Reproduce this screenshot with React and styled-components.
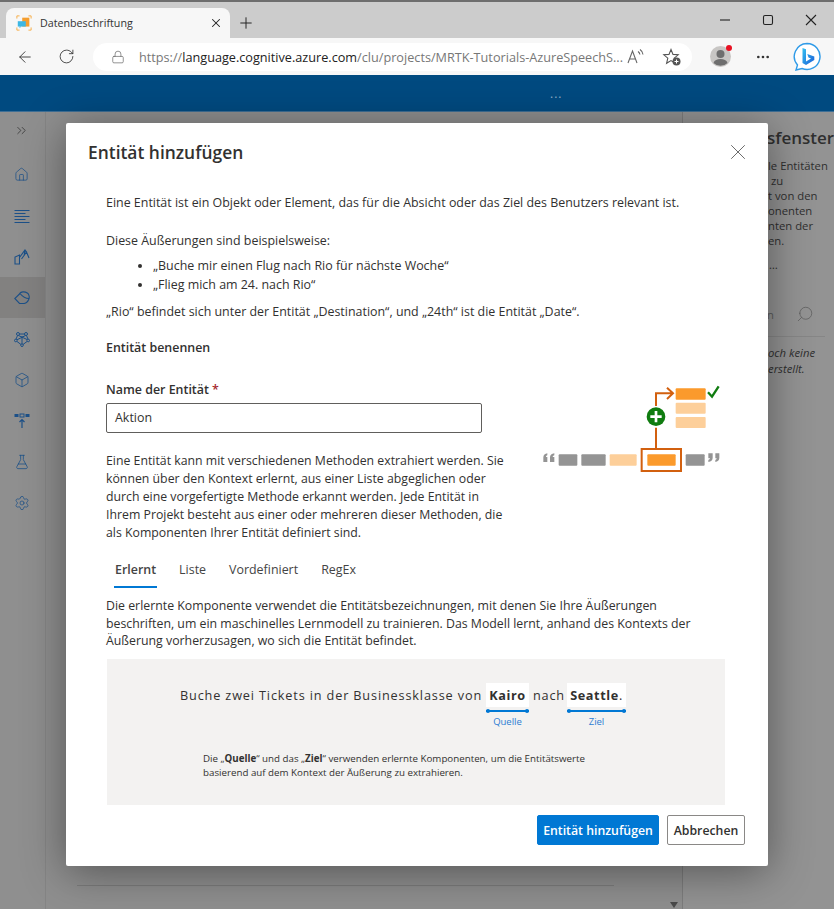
import React from "react";
import styled, { createGlobalStyle } from "styled-components";
import {
  ArrowLeft,
  Box,
  ChevronsRight,
  FlaskConical,
  House,
  Lock,
  MoreHorizontal,
  Plus,
  RotateCw,
  Search,
  Settings,
  X,
} from "lucide-react";

const GlobalStyle = createGlobalStyle`
  html, body {
    margin: 0;
    padding: 0;
    background: #8f8f8f;
  }
  body {
    font-family: "Open Sans", "Noto Sans", sans-serif;
    color: #323130;
  }
  svg {
    flex-shrink: 0;
  }
`;

const Window = styled.div`
  position: relative;
  width: 834px;
  height: 909px;
  overflow: hidden;
  display: flex;
  flex-direction: column;
`;

const TabStrip = styled.div`
  height: 36px;
  flex: none;
  background: #cccccc;
  border-top: 2px solid #6e6e6e;
  display: flex;
  align-items: flex-end;
  padding-left: 6px;
  position: relative;
`;

const BrowserTab = styled.div`
  width: 224px;
  height: 30px;
  background: #f7f7f7;
  border-radius: 8px 8px 0 0;
  display: flex;
  align-items: center;
  padding: 0 7px 0 10px;
  box-sizing: border-box;
  font-size: 10.7px;
  color: #333;
`;

const TabTitle = styled.span`
  margin-left: 8px;
  flex: 1;
`;

const NewTab = styled.div`
  margin: 0 0 6px 7px;
  display: flex;
  color: #222;
`;

const WindowButtons = styled.div`
  margin-left: auto;
  height: 36px;
  align-self: flex-start;
  display: flex;
  align-items: center;
  gap: 27px;
  padding-right: 15px;
  color: #222;
`;

const Toolbar = styled.div`
  height: 37px;
  flex: none;
  box-sizing: border-box;
  background: #f7f7f7;
  display: flex;
  align-items: center;
  padding: 0 13px 0 16px;
  color: #333;
`;

const ToolGap = styled.div`
  display: flex;
  width: ${(p) => p.$w}px;
  flex: none;
`;

const Address = styled.div`
  width: 599px;
  height: 28px;
  flex: none;
  border-radius: 14px;
  background: #fff;
  display: flex;
  align-items: center;
  padding: 0 10px 0 18px;
  box-sizing: border-box;
  color: #666;
`;

const Url = styled.div`
  margin-left: 14px;
  flex: 1;
  min-width: 0;
  font-size: 12.68px;
  white-space: nowrap;
  color: #777;
  b {
    font-weight: 400;
    color: #222;
  }
`;

const Avatar = styled.div`
  position: relative;
  width: 21px;
  height: 21px;
  display: flex;
  border-radius: 50%;
  background: #c8c6c4;
  overflow: visible;
  &::after {
    content: "";
    position: absolute;
    right: -1px;
    top: -1px;
    width: 6px;
    height: 6px;
    border-radius: 50%;
    background: #e81123;
  }
`;

const BlueBar = styled.div`
  height: 37px;
  flex: none;
  background: #004a80;
  border-bottom: 1px solid #3f6f95;
  color: #8fb0c8;
  display: flex;
  align-items: center;
  padding-left: 550px;
  box-sizing: border-box;
  font-size: 12px;
  letter-spacing: 1px;
`;

const Page = styled.div`
  flex: 1;
  display: flex;
  min-height: 0;
  background: #8f8f8f;
`;

const Sidebar = styled.nav`
  width: 45px;
  flex: none;
  border-right: 1px solid #858585;
  display: flex;
  flex-direction: column;
`;

const NavItem = styled.div`
  height: 41px;
  flex: none;
  display: flex;
  align-items: center;
  padding-left: 14px;
  color: #1c5088;
  background: ${(p) => (p.$active ? "#828180" : "transparent")};
`;

const ExpandItem = styled(NavItem)`
  height: 42px;
  box-sizing: border-box;
  padding-bottom: 6px;
  color: #3d3d3d;
`;

const Main = styled.main`
  flex: 1;
  position: relative;
  display: flex;
  flex-direction: column;
  justify-content: flex-end;
  padding: 0 68px 23px 31px;
`;

const MainRule = styled.div`
  height: 1px;
  background: #7c7c7c;
`;

const ScrollArrow = styled.div`
  position: absolute;
  right: 4px;
  bottom: 1px;
  width: 0;
  height: 0;
  border-left: 4px solid transparent;
  border-right: 4px solid transparent;
  border-top: 6px solid #4a4a4a;
`;

const HelpPane = styled.aside`
  width: 152px;
  flex: none;
  border-left: 1px solid #7d7d7d;
  box-sizing: border-box;
  padding-top: 14px;
  background: #939393;
  color: #2f2f2f;
  font-size: 11.3px;
  line-height: 15px;
`;

const HelpTitle = styled.div`
  padding-left: ${(p) => p.$x}px;
  font-size: 17px;
  line-height: 24px;
  font-weight: 600;
  white-space: nowrap;
  margin-bottom: 8px;
`;

const HelpLine = styled.div`
  padding-left: ${(p) => p.$x}px;
  white-space: nowrap;
  font-style: ${(p) => (p.$italic ? "italic" : "normal")};
  margin-top: ${(p) => p.$top || 0}px;
`;

const HelpSearch = styled.div`
  margin: 33px 9px 0 84px;
  padding: 0 11px 13px 0;
  border-bottom: 1px solid #868686;
  display: flex;
  justify-content: space-between;
  align-items: center;
  color: #5c5c5c;
`;

const Modal = styled.div`
  position: absolute;
  left: 66px;
  top: 123px;
  width: 702px;
  height: 743px;
  box-sizing: border-box;
  background: #fff;
  border-radius: 2px;
  box-shadow: 0 6px 44px rgba(0, 0, 0, 0.42);
  padding: 16px 23px 21px 40px;
  display: flex;
  flex-direction: column;
  font-size: 12.43px;
  line-height: 18px;
  color: #323130;
`;

const ModalHeader = styled.header`
  display: flex;
  justify-content: space-between;
  align-items: center;
  margin: 0 0 29px -18px;
  height: 26px;
`;

const ModalTitle = styled.h1`
  margin: 0;
  font-size: 17.4px;
  font-weight: 600;
  color: #323130;
`;

const CloseButton = styled.div`
  display: flex;
  color: #555;
  margin-right: -6px;
`;

const Text = styled.p`
  margin: 0 0 ${(p) => p.$after ?? 0}px;
  white-space: nowrap;
`;

const Bullets = styled.ul`
  margin: 0 0 9px;
  padding-left: 47px;
  line-height: 19px;
  white-space: nowrap;
`;

const SectionLabel = styled.div`
  font-weight: 600;
  margin-bottom: 24px;
`;

const NameRow = styled.div`
  display: flex;
  justify-content: space-between;
  padding-right: 20px;
`;

const NameColumn = styled.div`
  width: 376px;
`;

const FieldLabel = styled.label`
  display: block;
  font-weight: 600;
  margin-bottom: 4px;
  span {
    color: #a4262c;
    margin-left: 3px;
  }
`;

const NameInput = styled.div`
  height: 30px;
  box-sizing: border-box;
  border: 1px solid #605e5c;
  border-radius: 2px;
  padding: 0 8px;
  display: flex;
  align-items: center;
  margin-bottom: 19px;
`;

const MethodText = styled(Text)`
  font-size: 12.3px;
`;

const Tabs = styled.div`
  display: flex;
  gap: 23px;
  margin: 17px 0 9px 9px;
  height: 29px;
`;

const TabItem = styled.div`
  position: relative;
  font-weight: ${(p) => (p.$active ? 600 : 400)};
  color: #444;
  padding-top: 2px;
  &::after {
    content: "";
    display: ${(p) => (p.$active ? "block" : "none")};
    position: absolute;
    left: -1px;
    right: -1px;
    bottom: 0;
    height: 2px;
    background: #0078d4;
  }
`;

const TabText = styled(Text)`
  font-size: 12.33px;
  line-height: 17.5px;
`;

const Example = styled.div`
  width: 618px;
  height: 146px;
  flex: none;
  margin: 9px 0 0 1px;
  background: #f3f2f1;
  box-sizing: border-box;
  padding: 24px 0 0 73px;
`;

const Sentence = styled.div`
  display: flex;
  align-items: flex-start;
  font-size: 12.7px;
  line-height: 24px;
  letter-spacing: 0.85px;
  white-space: pre;
`;

const Entity = styled.div`
  display: flex;
  flex-direction: column;
  align-items: center;
  color: #0078d4;
  margin-left: ${(p) => p.$pull || 0}px;
`;

const EntityWord = styled.div`
  background: #fff;
  color: #323130;
  padding: 0 3px;
  letter-spacing: 0.6px;
  b {
    font-weight: 700;
  }
`;

const EntityLine = styled.div`
  position: relative;
  align-self: stretch;
  height: 2px;
  margin-top: 3px;
  background: #0078d4;
  &::before,
  &::after {
    content: "";
    position: absolute;
    top: -1px;
    width: 4px;
    height: 4px;
    border-radius: 50%;
    background: #0078d4;
  }
  &::before {
    left: 0;
  }
  &::after {
    right: 0;
  }
`;

const EntityName = styled.div`
  font-size: 9.5px;
  line-height: 14px;
  letter-spacing: 0;
  margin-top: 3px;
  color: #2b7cd3;
`;

const ExampleNote = styled.p`
  margin: 23px 0 0 23px;
  font-size: 9.75px;
  line-height: 14px;
  white-space: nowrap;
  b {
    font-weight: 700;
  }
`;

const Footer = styled.footer`
  margin-top: auto;
  display: flex;
  justify-content: flex-end;
  gap: 8px;
`;

const Button = styled.button`
  height: 30px;
  padding: 0;
  width: ${(p) => p.$w}px;
  border-radius: 2px;
  font-family: inherit;
  font-size: 12.3px;
  font-weight: 600;
  border: 1px solid ${(p) => (p.$primary ? "#0078d4" : "#8a8886")};
  background: ${(p) => (p.$primary ? "#0078d4" : "#fff")};
  color: ${(p) => (p.$primary ? "#fff" : "#323130")};
`;

const Favicon = () => (
  <svg width="16" height="16" viewBox="0 0 18 18">
    <g fill="none" stroke="#f7a93b" strokeWidth="1">
      <path d="M1 4V1h3M14 1h3v3M17 14v3h-3M4 17H1v-3" />
    </g>
    <rect x="7" y="3" width="8" height="10" fill="#f59e2f" />
    <rect x="2" y="7" width="9" height="6" fill="#3db7e4" />
    <path d="M4 13v2l2-2z" fill="#3db7e4" />
  </svg>
);

const ReadAloud = () => (
  <svg width="18" height="18" viewBox="0 0 18 18" fill="none" stroke="#666" strokeWidth="1.1">
    <path d="M1 15 5.5 3 10 15M2.6 11h5.8" />
    <path d="M11 3.500c1.200.8 1.800 1.800 1.900 3M13 1.500c1.800 1.200 2.800 3 3 5" />
  </svg>
);

const FavAdd = () => (
  <svg width="20" height="20" viewBox="0 0 20 20">
    <path
      d="M9 2.500 11 7.400l5.200.4-4 3.400 1.200 5.100L9 13.600l-4.400 2.700 1.200-5.100-4-3.400 5.200-.4z"
      fill="none"
      stroke="#555"
      strokeWidth="1.1"
    />
    <circle cx="14.500" cy="14.500" r="4" fill="#555" />
    <path d="M14.500 12.500v4M12.500 14.500h4" stroke="#fff" strokeWidth="1" />
  </svg>
);

const BingLogo = () => (
  <svg width="30" height="30" viewBox="0 0 30 30">
    <defs>
      <linearGradient id="bing" x1="0" y1="0" x2="1" y2="1">
        <stop offset="0" stopColor="#35c1f1" />
        <stop offset="1" stopColor="#1a5fd8" />
      </linearGradient>
    </defs>
    <path
      d="M15 1.500a13 13 0 1 1-5 25l-6 1.500 1.500-5A13 13 0 0 1 15 1.500z"
      fill="#fff"
      stroke="#2f9be8"
      strokeWidth="1.400"
    />
    <path
      d="M10.500 6 14 7.200v12.300l5-2.900-2.500-1.200-1.200-3.300 7 2.500v3.500L14 23l-3.500-2z"
      fill="url(#bing)"
    />
  </svg>
);

const ArchIcon = () => (
  <svg width="16" height="17" viewBox="0 0 16 17" fill="none" stroke="currentColor" strokeWidth="1.100">
    <path d="M1 16V9l4.500-2v9zM1 16h4.500M5.500 9.500 11 2l1.500 2-5 7M12.500 4l2.500 6M11 2l-1 6" />
  </svg>
);

const TagIcon = () => (
  <svg width="16" height="14" viewBox="0 0 16 14" fill="none" stroke="currentColor" strokeWidth="1.100">
    <path d="M6 2.500.8 7.500l4.700 5h5" />
    <path d="M5.500 2.500c1.500-1.800 5-2.300 7.800-.5 2 1.300 2.400 4.500 1.400 6.500-1 2.300-3 4-5.200 4" />
    <path d="M6 2.500c2 2.500 5 5 9 5" />
  </svg>
);

const NetworkIcon = () => (
  <svg width="16" height="16" viewBox="0 0 16 16" fill="none" stroke="currentColor" strokeWidth="1">
    <circle cx="4" cy="3" r="1.500" />
    <circle cx="12" cy="3" r="1.500" />
    <circle cx="1.800" cy="9.500" r="1.300" />
    <circle cx="14.200" cy="9.500" r="1.300" />
    <circle cx="8" cy="14.200" r="1.300" />
    <path d="M5.500 3h5M3.500 4.500 2 8.200M12.500 4.500 14 8.200M3 10.500l4 3M13 10.500l-4 3M4.500 4.500l8.500 4M11.500 4.500 3 8.800M8 13V5" />
  </svg>
);

const ComponentIcon = () => (
  <svg width="16" height="16" viewBox="0 0 16 16" fill="currentColor">
    <rect x="0.500" y="1" width="4" height="3" />
    <rect x="6" y="1" width="4" height="3" fill="none" stroke="currentColor" />
    <rect x="11.500" y="1" width="4" height="3" />
    <path d="M8 15V7M5.500 9 8 6.500 10.500 9" fill="none" stroke="currentColor" strokeWidth="1.200" />
  </svg>
);

const LinesIcon = () => (
  <svg width="16" height="16" viewBox="0 0 16 16" fill="none" stroke="currentColor" strokeWidth="1">
    <path d="M.5 2.500h15M.5 5.500h11M.5 8.500h15M.5 11.500h11M.5 14.500h15" />
  </svg>
);

const EntityArt = () => (
  <svg width="185" height="110" viewBox="60 60 555 330">
    <g fill="#949494">
      <rect x="116" y="280" width="56" height="34" rx="3" />
      <rect x="184" y="280" width="73" height="34" rx="3" />
      <rect x="497" y="280" width="57" height="34" rx="3" />
      <path d="M70 303v-14c0-7 5-11 12-12v6c-3 1-4 3-4 5h4v15zM90 303v-14c0-7 5-11 13-12v6c-3 1-5 3-5 5h5v15z" />
      <path d="M598 277v14c0 7-5 11-12 12v-6c3-1 4-3 4-5h-4v-15zM578 277v14c0 7-5 11-13 12v-6c3-1 5-3 5-5h-5v-15z" />
    </g>
    <g fill="#fdcf9a">
      <rect x="269" y="280" width="81" height="34" rx="3" />
      <rect x="467" y="125" width="90" height="33" rx="3" />
      <rect x="467" y="168" width="90" height="33" rx="3" />
    </g>
    <g fill="#fb9a2c">
      <rect x="382" y="280" width="85" height="34" rx="3" />
      <rect x="467" y="82" width="90" height="34" rx="3" />
    </g>
    <g fill="none" stroke="#d2600f" strokeWidth="6">
      <rect x="365" y="264" width="118" height="66" />
      <path d="M408 262v-62M408 135V97h48M441 80l18 17-18 17" />
    </g>
    <circle cx="408" cy="167" r="28" fill="#107c10" />
    <path d="M408 150v34M391 167h34" stroke="#fff" strokeWidth="8" />
    <path d="M564 94l12 13 20-31" fill="none" stroke="#107c10" strokeWidth="7" />
  </svg>
);

export default function App() {
  return (
    <Window>
      <GlobalStyle />
      <TabStrip>
        <BrowserTab>
          <Favicon />
          <TabTitle>Datenbeschriftung</TabTitle>
          <X size={14} strokeWidth={1.800} color="#222" />
        </BrowserTab>
        <NewTab>
          <Plus size={18} strokeWidth={1.300} />
        </NewTab>
        <WindowButtons>
          <svg width="16" height="16" viewBox="0 0 16 16" stroke="#222" strokeWidth="1.100" fill="none">
            <path d="M3 8h10" />
          </svg>
          <svg width="16" height="16" viewBox="0 0 16 16" stroke="#222" strokeWidth="1.100" fill="none">
            <rect x="3.500" y="3.500" width="9" height="9" rx="1.500" />
          </svg>
          <svg width="16" height="16" viewBox="0 0 16 16" stroke="#222" strokeWidth="1.100" fill="none">
            <path d="M3 3l10 10M13 3 3 13" />
          </svg>
        </WindowButtons>
      </TabStrip>
      <Toolbar>
        <ToolGap $w={42}>
          <ArrowLeft size={18} strokeWidth={1.200} />
        </ToolGap>
        <ToolGap $w={35}>
          <RotateCw size={17} strokeWidth={1.200} />
        </ToolGap>
        <Address>
          <Lock size={14} strokeWidth={1.200} />
          <Url>
            https://<b>language.cognitive.azure.com</b>/clu/projects/MRTK-Tutorials-AzureSpeechS...
          </Url>
          <ToolGap $w={35}>
            <ReadAloud />
          </ToolGap>
          <FavAdd />
        </Address>
        <ToolGap $w={18} />
        <Avatar>
          <svg width="21" height="21" viewBox="0 0 21 21" fill="#6e6e6e">
            <circle cx="10.500" cy="8" r="4" />
            <path d="M3.500 17c1-3 3.500-4 7-4s6 1 7 4a10 10 0 0 1-14 0z" />
          </svg>
        </Avatar>
        <ToolGap $w={24} />
        <MoreHorizontal size={16} strokeWidth={2} />
        <ToolGap $w={21} />
        <BingLogo />
      </Toolbar>
      <BlueBar>...</BlueBar>
      <Page>
        <Sidebar>
          <ExpandItem>
            <ChevronsRight size={15} strokeWidth={1.400} />
          </ExpandItem>
          <NavItem>
            <House size={15} strokeWidth={1.200} />
          </NavItem>
          <NavItem>
            <LinesIcon />
          </NavItem>
          <NavItem>
            <ArchIcon />
          </NavItem>
          <NavItem $active>
            <TagIcon />
          </NavItem>
          <NavItem>
            <NetworkIcon />
          </NavItem>
          <NavItem>
            <Box size={16} strokeWidth={1.200} />
          </NavItem>
          <NavItem>
            <ComponentIcon />
          </NavItem>
          <NavItem>
            <FlaskConical size={16} strokeWidth={1.200} />
          </NavItem>
          <NavItem>
            <Settings size={16} strokeWidth={1.100} />
          </NavItem>
        </Sidebar>
        <Main>
          <MainRule />
          <ScrollArrow />
        </Main>
        <HelpPane>
          <HelpTitle $x={84}>sfenster</HelpTitle>
          <HelpLine $x={85}>le Entitäten</HelpLine>
          <HelpLine $x={88}>zu</HelpLine>
          <HelpLine $x={85}>t von den</HelpLine>
          <HelpLine $x={85}>onenten</HelpLine>
          <HelpLine $x={85}>nten der</HelpLine>
          <HelpLine $x={85}>en.</HelpLine>
          <HelpLine $x={86} $top={9}>…</HelpLine>
          <HelpSearch>
            <span>n</span>
            <Search size={18} strokeWidth={1} style={{ transform: "scaleX(-1)" }} />
          </HelpSearch>
          <HelpLine $x={85} $italic $top={8}>och keine</HelpLine>
          <HelpLine $x={85} $italic $top={1}>erstellt.</HelpLine>
        </HelpPane>
      </Page>
      <Modal>
        <ModalHeader>
          <ModalTitle>Entität hinzufügen</ModalTitle>
          <CloseButton>
            <X size={26} strokeWidth={0.800} />
          </CloseButton>
        </ModalHeader>
        <Text $after={20}>
          Eine Entität ist ein Objekt oder Element, das für die Absicht oder das Ziel des Benutzers relevant ist.
        </Text>
        <Text $after={6}>Diese Äußerungen sind beispielsweise:</Text>
        <Bullets>
          <li>„Buche mir einen Flug nach Rio für nächste Woche“</li>
          <li>„Flieg mich am 24. nach Rio“</li>
        </Bullets>
        <Text $after={18}>
          „Rio“ befindet sich unter der Entität „Destination“, und „24th“ ist die Entität „Date“.
        </Text>
        <SectionLabel>Entität benennen</SectionLabel>
        <NameRow>
          <NameColumn>
            <FieldLabel>
              Name der Entität<span>*</span>
            </FieldLabel>
            <NameInput>Aktion</NameInput>
            <MethodText>
              Eine Entität kann mit verschiedenen Methoden extrahiert werden. Sie
              <br />
              können über den Kontext erlernt, aus einer Liste abgeglichen oder
              <br />
              durch eine vorgefertigte Methode erkannt werden. Jede Entität in
              <br />
              Ihrem Projekt besteht aus einer oder mehreren dieser Methoden, die
              <br />
              als Komponenten Ihrer Entität definiert sind.
            </MethodText>
          </NameColumn>
          <EntityArt />
        </NameRow>
        <Tabs>
          <TabItem $active>Erlernt</TabItem>
          <TabItem>Liste</TabItem>
          <TabItem>Vordefiniert</TabItem>
          <TabItem>RegEx</TabItem>
        </Tabs>
        <TabText>
          Die erlernte Komponente verwendet die Entitätsbezeichnungen, mit denen Sie Ihre Äußerungen
          <br />
          beschriften, um ein maschinelles Lernmodell zu trainieren. Das Modell lernt, anhand des Kontexts der
          <br />
          Äußerung vorherzusagen, wo sich die Entität befindet.
        </TabText>
        <Example>
          <Sentence>
            {"Buche zwei Tickets in der Businessklasse von "}
            <Entity>
              <EntityWord><b>Kairo</b></EntityWord>
              <EntityLine />
              <EntityName>Quelle</EntityName>
            </Entity>
            {" nach "}
            <Entity $pull={-2}>
              <EntityWord><b>Seattle</b>.</EntityWord>
              <EntityLine />
              <EntityName>Ziel</EntityName>
            </Entity>
          </Sentence>
          <ExampleNote>
            Die „<b>Quelle</b>“ und das „<b>Ziel</b>“ verwenden erlernte Komponenten, um die Entitätswerte
            <br />
            basierend auf dem Kontext der Äußerung zu extrahieren.
          </ExampleNote>
        </Example>
        <Footer>
          <Button $primary $w={122}>Entität hinzufügen</Button>
          <Button $w={78}>Abbrechen</Button>
        </Footer>
      </Modal>
    </Window>
  );
}
